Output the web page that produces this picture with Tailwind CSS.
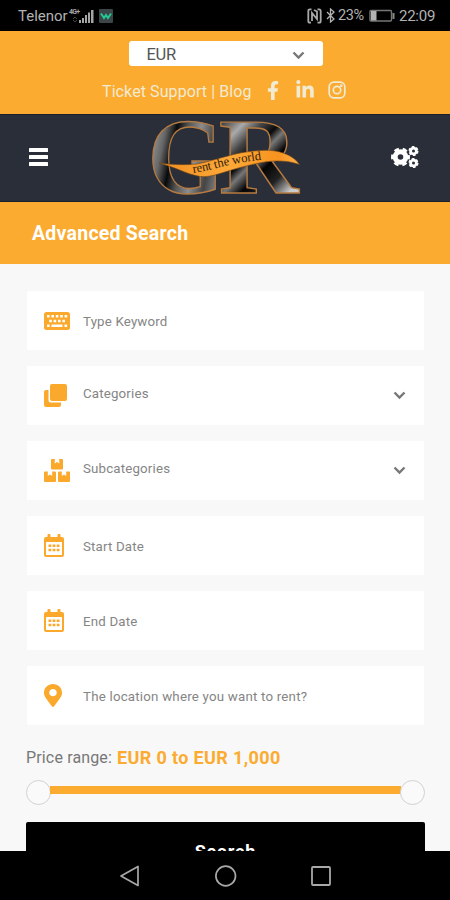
<!DOCTYPE html>
<html lang="en">
<head>
<meta charset="utf-8">
<title>Advanced Search</title>
<script src="https://cdn.jsdelivr.net/npm/@tailwindcss/browser@4"></script>
</head>
<body class="w-[450px] h-[900px] overflow-hidden flex flex-col bg-[#f8f8f8] font-[Roboto,sans-serif]">

<!-- Status bar -->
<div class="h-[31px] shrink-0 bg-black flex items-center pl-[18px] pr-[14px] text-[#b2b2b2] text-[15px] leading-[18px]">
  <span class="w-[50px] whitespace-nowrap">Telenor</span>
  <svg class="w-[27px] h-[20px]" viewBox="0 0 27 20" fill="#a5a5a5">
    <text x="1" y="8" font-size="7" font-weight="700" textLength="11" font-family="Roboto">4G+</text>
    <path d="M11 14h2v3h-2zM14 12h2v5h-2zM17 9h2v8h-2zM20 6.500h2v10.500h-2zM23 4h2.500v13h-2.500z"/>
    <path d="M5 13l2-2 2 2M5 14l2 2 2-2" fill="none" stroke="#555" stroke-width=".8"/>
  </svg>
  <svg class="ml-[4px] w-[14px] h-[14px]" viewBox="0 0 14 14"><rect width="14" height="14" rx="1" fill="#3c4548"/><path d="M2 4.500l3 4.500 2-3 2 3L12 4.500" fill="none" stroke="#22c993" stroke-width="1.900"/></svg>
  <div class="ml-auto flex items-center">
    <svg class="w-[15px] h-[16px]" viewBox="0 0 15 16" fill="none" stroke="#a8a8a8" stroke-width="1.800"><path d="M4.500 1.300H3Q1.300 1.300 1.300 3v10q0 1.700 1.700 1.700h1M10.500 1.300H12q1.700 0 1.700 1.700v10q0 1.700-1.700 1.700h-1.500M5 13V5l5 6V3.500L7 2"/></svg>
    <svg class="ml-[4px] w-[10px] h-[15px]" viewBox="0 0 10 15" fill="none" stroke="#b2b2b2" stroke-width="1.300"><path d="M1 4l7 7-3.500 3V1L8 4l-7 7"/></svg>
    <span class="ml-[2px] w-[28px] text-[14.500px] tracking-[-0.400px]">23%</span>
    <svg class="ml-[3px] w-[26px] h-[14px]" viewBox="0 0 26 14"><rect x="1" y="1.500" width="21.500" height="10.500" rx="1" fill="none" stroke="#777" stroke-width="1.400"/><path d="M2 2h5.500v9.500H2z" fill="#b2b2b2"/><path d="M23.500 4h2v6h-2z" fill="#888"/></svg>
    <span class="ml-[4px] w-[37px] text-[15px] tracking-[-0.250px] whitespace-nowrap">22:09</span>
  </div>
</div>

<!-- Top bar -->
<div class="h-[83px] shrink-0 bg-[#fbab30] flex flex-col items-center pt-[10px]">
  <div class="w-[194px] h-[25px] ml-px rounded-[3px] bg-white flex items-center justify-between pl-[18px] pr-[18px] text-[#555] text-[16.500px]">
    <span class="pt-[3px] tracking-[-0.300px]">EUR</span>
    <svg class="w-[13px] h-[9px] mt-[4px]" viewBox="0 0 13 9" fill="none" stroke="#777" stroke-width="2.400"><path d="M1.500 1.500l5 5 5-5"/></svg>
  </div>
  <div class="mt-[12px] h-[24px] w-[246px] flex items-center text-[#f3ead2] fill-[#f3ead2] text-[16px]">
    <span class="w-[151px] whitespace-nowrap pt-[3px] tracking-[0.090px]">Ticket Support | Blog</span>
    <svg class="ml-[14px] w-[12px] h-[19px]" viewBox="0 0 320 512"><path d="M279.140 288l14.220-92.660h-88.910v-60.130c0-25.350 12.420-50.060 52.240-50.060h40.420V6.260S260.430 0 225.360 0c-73.220 0-121.080 44.380-121.080 124.720v70.620H22.890V288h81.390v224h100.170V288z"/></svg>
    <svg class="ml-[17px] w-[18px] h-[20px]" viewBox="0 0 448 512"><path d="M100.280 448H7.400V148.900h92.880zM53.790 108.100C24.090 108.100 0 83.500 0 53.800a53.790 53.790 0 0 1 107.580 0c0 29.700-24.100 54.300-53.790 54.300zM447.900 448h-92.680V302.400c0-34.700-.7-79.200-48.290-79.200-48.290 0-55.690 37.700-55.690 76.700V448h-92.780V148.900h89.080v40.800h1.300c12.400-23.500 42.690-48.300 87.880-48.300 94 0 111.280 61.900 111.280 142.300V448z"/></svg>
    <svg class="ml-[14px] w-[18px] h-[18px]" viewBox="0 0 18 18" fill="none" stroke="#f3ead2" stroke-width="1.700"><rect x="1.200" y="1.200" width="15.600" height="15.600" rx="4.500"/><circle cx="9" cy="9" r="3.700"/><circle cx="13.300" cy="4.700" r=".5"/></svg>
  </div>
</div>

<!-- Header -->
<header class="h-[88px] shrink-0 bg-[#292e38] border-y border-[#17202c] flex items-center justify-between pl-[29px] pr-[31px]">
  <svg class="w-[20px] h-[18px] -mt-[2px]" viewBox="0 0 20 18" fill="#fff"><rect y="0" width="19" height="4" rx=".6"/><rect y="7" width="19" height="4" rx=".6"/><rect y="14" width="19" height="4" rx=".6"/></svg>
  <svg class="w-[154px] h-[84px] ml-[11px]" viewBox="149 116 154 84">
    <defs>
      <linearGradient id="g" gradientUnits="userSpaceOnUse" x1="4" y1="-36" x2="75" y2="-20"><stop offset="0" stop-color="#8a8a8a"/><stop offset=".12" stop-color="#666"/><stop offset=".27" stop-color="#08090b"/><stop offset=".42" stop-color="#555"/><stop offset=".6" stop-color="#8d8d8d"/><stop offset=".8" stop-color="#444"/><stop offset="1" stop-color="#888"/></linearGradient>
      <linearGradient id="r" gradientUnits="userSpaceOnUse" x1="2" y1="-66" x2="70" y2="0"><stop offset="0" stop-color="#333"/><stop offset=".17" stop-color="#aaa"/><stop offset=".3" stop-color="#444"/><stop offset=".42" stop-color="#0a0a0a"/><stop offset=".5" stop-color="#777"/><stop offset=".62" stop-color="#050505"/><stop offset=".78" stop-color="#222"/><stop offset=".95" stop-color="#ccc"/></linearGradient>
      <linearGradient id="b" x1="0" x2="1"><stop offset="0" stop-color="#f08f22"/><stop offset=".5" stop-color="#fda938"/><stop offset=".85" stop-color="#f8931f"/><stop offset="1" stop-color="#ffb04a"/></linearGradient>
    </defs>
    <g font-family="Liberation Serif, serif" font-weight="700" font-size="100" stroke="#b57b42" stroke-width="1.300">
      <text transform="translate(148 193) scale(.98 1.080)" fill="url(#g)">G</text>
      <text transform="translate(219 192.500) scale(1.100 1.080)" fill="url(#r)">R</text>
    </g>
    <path d="M159 163C173 165 186 165 197 164C208 162 222 157 240 153C252 151 266 149 278 151.500C288 154 295 158 299.500 164.500C288 160.500 275 160 262 162.500C248 165 234 169 220 173.500C212 176 207 177 200 176.500C186 174 175 167 159 163Z" fill="url(#b)" stroke="#6f431a" stroke-width=".6"/>
    <path id="wave" d="M193 173C206 171 214 168.500 225 166C237 163 250 161 270 158.500" fill="none"/>
    <text font-family="Liberation Serif, serif" font-size="12.500" fill="#30200f"><textPath href="#wave" textLength="70">rent the world</textPath></text>
  </svg>
  <svg class="w-[28px] h-[22px] -mt-[2px]" viewBox="0 0 28 22" fill="none" stroke="#fff">
    <circle cx="9.500" cy="11" r="5.300" stroke-width="5"/>
    <circle cx="9.500" cy="11" r="8" stroke-width="3" stroke-dasharray="4.600 3.778" stroke-dashoffset="2.300"/>
    <circle cx="22.500" cy="5" r="2.900" stroke-width="2.800"/>
    <circle cx="22.500" cy="5" r="4.300" stroke-width="1.500" stroke-dasharray="2.600 1.903"/>
    <circle cx="22.500" cy="17" r="2.900" stroke-width="2.800"/>
    <circle cx="22.500" cy="17" r="4.300" stroke-width="1.500" stroke-dasharray="2.600 1.903"/>
  </svg>
</header>

<h1 class="h-[62px] shrink-0 bg-[#fbab30] text-white text-[19.500px] tracking-[0.240px] font-bold flex items-center pl-[32px] pt-[2px]">Advanced Search</h1>

<!-- Search form -->
<main class="h-[587px] shrink-0 px-[26px] pt-[27px] overflow-hidden">
  <div class="w-[398px] flex flex-col gap-4 text-[#858585] text-[13.300px] tracking-[0.170px] fill-[#fba92c]">
    <div class="h-[59px] ml-px bg-white flex items-center pl-[17px]">
      <svg class="w-[26px] h-[18px]" viewBox="0 0 26 18"><rect width="26" height="18" rx="2.500"/><g stroke="#fff" stroke-width="2.400" fill="none"><path d="M3 4.300h20.500" stroke-dasharray="2.600 1.800"/><path d="M5.200 9h17" stroke-dasharray="2.600 1.800"/><path d="M3 13.700h2.600M7.500 13.700h11M20.500 13.700h2.600"/></g></svg>
      <span class="ml-[13px] pt-[2px]">Type Keyword</span>
    </div>
    <div class="h-[59px] ml-px bg-white flex items-center pl-[17px] pr-[18px]">
      <svg class="w-[23px] h-[23px]" viewBox="0 0 23 23"><rect x="6" width="17" height="17" rx="2"/><path d="M4.500 6H2a2 2 0 0 0-2 2v13a2 2 0 0 0 2 2h13a2 2 0 0 0 2-2v-2.500H7A2.500 2.500 0 0 1 4.500 16z"/></svg>
      <span class="ml-[16px] pb-[3px]">Categories</span>
      <svg class="ml-auto w-[13px] h-[9px]" viewBox="0 0 13 9" fill="none" stroke="#777" stroke-width="2.400"><path d="M1.500 1.500l5 5 5-5"/></svg>
    </div>
    <div class="h-[59px] ml-px bg-white flex items-center pl-[17px] pr-[18px]">
      <svg class="w-[26px] h-[23px]" viewBox="0 0 26 23"><path id="box" d="M8 0h2.800v4.500l2.200-1.500 2.200 1.500V0H18q1 0 1 1v8.500q0 1-1 1H8q-1 0-1-1V1q0-1 1-1z"/><use href="#box" x="-7" y="12.500"/><use href="#box" x="7" y="12.500"/></svg>
      <span class="ml-[13px] pb-[3px]">Subcategories</span>
      <svg class="ml-auto w-[13px] h-[9px]" viewBox="0 0 13 9" fill="none" stroke="#777" stroke-width="2.400"><path d="M1.500 1.500l5 5 5-5"/></svg>
    </div>
    <div class="h-[59px] ml-px bg-white flex items-center pl-[17px]">
      <svg class="w-[20px] h-[24px]" viewBox="0 0 20 24"><path id="cal" fill-rule="evenodd" d="M3.500 1q0-1 1-1h1q1 0 1 1v2h7V1q0-1 1-1h1q1 0 1 1v2H18a2 2 0 0 1 2 2v16a2 2 0 0 1-2 2H2a2 2 0 0 1-2-2V5a2 2 0 0 1 2-2h1.500zM2 8v13h16V8zM4.500 10.500h2.800v2.500h-2.800zM8.600 10.500h2.800v2.500h-2.800zM12.700 10.500h2.800v2.500h-2.800zM4.500 14.800h2.800v2.500h-2.800zM8.600 14.800h2.800v2.500h-2.800zM12.700 14.800h2.800v2.500h-2.800z"/></svg>
      <span class="ml-[19px] pt-[2px]">Start Date</span>
    </div>
    <div class="h-[59px] ml-px bg-white flex items-center pl-[17px]">
      <svg class="w-[20px] h-[24px]" viewBox="0 0 20 24"><use href="#cal"/></svg>
      <span class="ml-[19px] pt-[2px]">End Date</span>
    </div>
    <div class="h-[59px] ml-px bg-white flex items-center pl-[17px]">
      <svg class="w-[18px] h-[23px]" viewBox="0 0 384 512" preserveAspectRatio="none"><path d="M172.268 501.670C26.970 291.031 0 269.413 0 192 0 85.961 85.961 0 192 0s192 85.961 192 192c0 77.413-26.970 99.031-172.268 309.670-9.535 13.774-29.930 13.773-39.464 0zM192 272c44.183 0 80-35.817 80-80s-35.817-80-80-80-80 35.817-80 80 35.817 80 80 80z"/></svg>
      <span class="ml-[21px] pt-[2px] tracking-[0.210px]">The location where you want to rent?</span>
    </div>
  </div>

  <p class="mt-[21px] h-[22px] flex items-center whitespace-pre text-[#777] text-[16px]"><span class="w-[91px] tracking-[0.150px] pt-[2px]">Price range: </span><b class="font-bold text-[#fbab30] text-[18px] tracking-[0.370px]">EUR 0 to EUR 1,000</b></p>

  <div class="mt-[11px] w-[399px] h-[26px] flex items-center">
    <span class="w-[25px] h-[25px] shrink-0 rounded-full border-[1.500px] border-[#d2d2d2] bg-[#fafafa]"></span>
    <span class="h-[8px] -mx-px mb-[5px] flex-1 bg-[#fbab30]"></span>
    <span class="w-[25px] h-[25px] shrink-0 rounded-full border-[1.500px] border-[#d2d2d2] bg-[#fafafa]"></span>
  </div>

  <button class="mt-[17px] w-[399px] h-[59px] block rounded-[2px] bg-black text-white text-[18px] font-bold tracking-[0.900px]">Search</button>
</main>

<!-- Navigation bar -->
<nav class="h-[49px] shrink-0 bg-black flex items-center justify-center gap-[74px]">
  <svg class="w-[21px] h-[22px]" viewBox="0 0 21 22" fill="none" stroke="#a8a8a8" stroke-width="1.700" stroke-linejoin="round"><path d="M18 1.500v19L1 11z"/></svg>
  <svg class="w-[22px] h-[22px]" viewBox="0 0 22 22" fill="none" stroke="#a8a8a8" stroke-width="1.700"><circle cx="10.700" cy="11" r="9.800"/></svg>
  <svg class="w-[20px] h-[20px]" viewBox="0 0 20 20" fill="none" stroke="#a8a8a8" stroke-width="1.800"><rect x="1" y="1" width="18" height="18" rx="1"/></svg>
</nav>
</body>
</html>
